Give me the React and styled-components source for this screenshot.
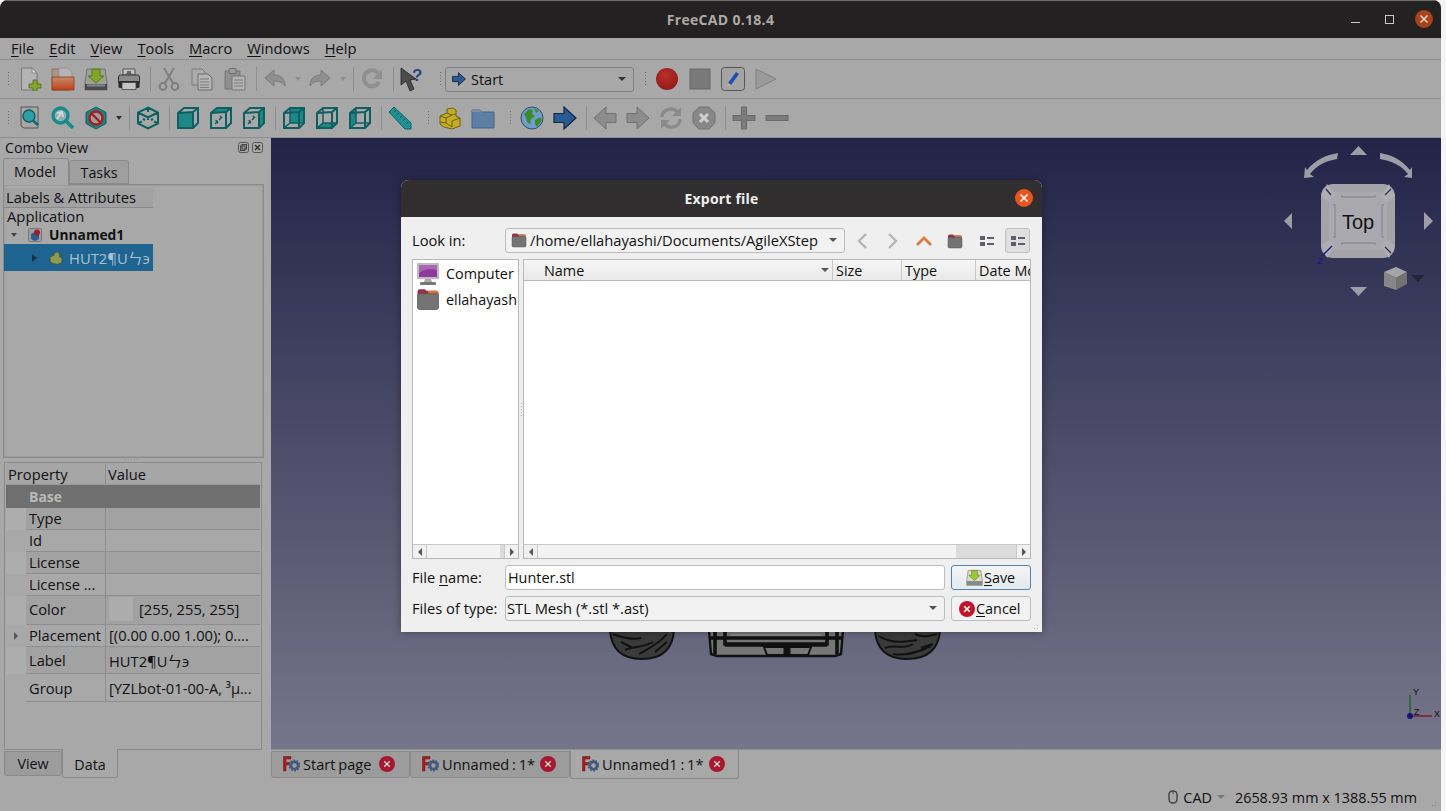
import React from 'react'
import styled, { createGlobalStyle } from 'styled-components'

const FONT = `"Open Sans", "Noto Sans CJK SC", sans-serif`

const Global = createGlobalStyle`
  html, body { margin: 0; padding: 0; background: #f4f4f4; overflow: hidden; }
  body { font-family: ${FONT}; font-size: 14px; color: #111; }
  * { box-sizing: border-box; }
`

const Screen = styled.div`
  position: relative;
  width: 1446px;
  height: 811px;
  overflow: hidden;
`
const Window = styled.div`
  display: flex;
  flex-direction: column;
  width: 1441px;
  height: 811px;
  background: #a8a8a8;
  border-radius: 8px 8px 0 0;
  overflow: hidden;
`
const TitleBar = styled.div`
  position: relative;
  flex: none;
  height: 38px;
  display: flex;
  align-items: center;
  justify-content: center;
  background: #232122;
  border-top: 1px solid #6c6c6c;
  color: #aeaaa2;
  font-weight: 700;
  font-size: 14px;
  letter-spacing: 0.3px;
`
const WinControls = styled.div`
  position: absolute;
  left: 1351px;
  top: 9px;
  display: flex;
  align-items: center;
`
const WinMin = styled.div`
  width: 9px;
  height: 1px;
  margin-top: 6px;
  background: #c8c8c8;
`
const WinMax = styled.div`
  width: 9px;
  height: 9px;
  margin-left: 25px;
  border: 1px solid #c8c8c8;
`
const WinClose = styled.div`
  width: 18px;
  height: 18px;
  margin-left: 21px;
  border-radius: 50%;
  background: #a8431c;
  color: #e4d4cc;
  display: flex;
  align-items: center;
  justify-content: center;
`
const MenuBar = styled.div`
  flex: none;
  height: 22px;
  display: flex;
  align-items: center;
  gap: 15px;
  padding: 0 0 2px 11px;
  border-bottom: 1px solid #8e8e8e;
  font-size: 14.7px;
`
const Key = styled.span`
  text-decoration: underline;
  text-underline-offset: 2px;
`
const ToolRow = styled.div`
  flex: none;
  height: 39px;
  display: flex;
  align-items: center;
  padding-left: 13.5px;
  border-bottom: 1px solid #8e8e8e;
  position: relative;
`
const ToolBtn = styled.div`
  flex: none;
  width: 33px;
  height: 26px;
  display: flex;
  align-items: center;
  justify-content: center;
`
const ToolArrow = styled.div`
  flex: none;
  width: 12px;
  display: flex;
  justify-content: center;
  &::after {
    content: '';
    border-left: 3.5px solid transparent;
    border-right: 3.5px solid transparent;
    border-top: 4px solid ${p => p.$dim ? '#8c8c8c' : '#333'};
  }
`
const ToolSep = styled.div`
  flex: none;
  width: 7px;
  height: 26px;
  position: relative;
  &::after {
    content: '';
    position: absolute;
    left: 4px;
    top: 1px;
    bottom: 1px;
    width: 1px;
    background: #8e8e8e;
  }
`
const Handle = styled.div`
  flex: none;
  width: 16.5px;
  height: 26px;
  position: relative;
  &::after {
    content: '';
    position: absolute;
    left: 10px;
    top: 5px;
    width: 3px;
    height: 16px;
    background-image: radial-gradient(circle, #707070 0.7px, transparent 0.9px);
    background-size: 3px 3px;
  }
`
const FirstHandle = styled(Handle)`
  position: absolute;
  left: -3px;
  top: 6px;
  width: 13px;
`
const StartCombo = styled.div`
  flex: none;
  width: 189px;
  height: 25px;
  display: flex;
  align-items: center;
  gap: 5px;
  padding: 0 7px 0 6px;
  border: 1px solid #808080;
  border-radius: 3px;
  font-size: 14.5px;
`
const ComboCaret = styled.span`
  margin-left: ${p => p.$inline ? '0' : 'auto'};
  border-left: 4px solid transparent;
  border-right: 4px solid transparent;
  border-top: 4px solid ${p => p.$c || '#333'};
`
const MainArea = styled.div`
  flex: 1;
  min-height: 0;
  display: flex;
`
const LeftPanel = styled.div`
  flex: none;
  width: 271px;
  display: flex;
  flex-direction: column;
`
const ComboHeader = styled.div`
  flex: none;
  height: 20px;
  display: flex;
  align-items: center;
  padding: 0 8px 2px 5px;
  font-size: 14.3px;
`
const FloatBtns = styled.div`
  margin-left: auto;
  display: flex;
  gap: 3px;
`
const TabRow = styled.div`
  flex: none;
  height: 26px;
  display: flex;
  align-items: flex-end;
  padding-left: 3px;
`
const UpperTab = styled.div`
  height: ${p => p.$on ? 27 : 24}px;
  width: ${p => p.$w}px;
  margin-bottom: ${p => p.$on ? -1 : 0}px;
  padding: 0 ${p => p.$on ? 2 : 0}px ${p => p.$on ? 2 : 0}px 0;
  display: flex;
  align-items: center;
  justify-content: center;
  position: relative;
  z-index: ${p => p.$on ? 2 : 0};
  background: ${p => p.$on ? '#a8a8a8' : '#9f9f9f'};
  border: 1px solid #8a8a8a;
  border-bottom: ${p => p.$on ? 'none' : '1px solid #8a8a8a'};
  border-radius: 3px 3px 0 0;
  font-size: 14.3px;
`
const TreeFrame = styled.div`
  flex: none;
  height: 274px;
  margin: 0 7px 0 3px;
  border: 1px solid #8a8a8a;
  box-shadow: inset 0 0 0 1px #9c9c9c;
  padding: 3px 1px 0 0;
`
const TreeHeader = styled.div`
  width: 149px;
  height: 20px;
  padding: 0 0 2px 2px;
  background: #a2a2a2;
  border-bottom: 1px solid #8a8a8a;
  display: flex;
  align-items: center;
  font-size: 14.7px;
`
const TreeLine = styled.div`
  width: 149px;
  height: ${p => p.$h}px;
  display: flex;
  align-items: center;
  padding-left: ${p => p.$pad}px;
  padding-bottom: ${p => p.$up ? 2 : 0}px;
  font-size: ${p => p.$bold ? 13.8 : 14.8}px;
  font-weight: ${p => p.$bold ? 700 : 400};
  background: ${p => p.$sel ? '#1f6491' : 'transparent'};
  color: ${p => p.$sel ? '#a9c2d2' : '#111'};
`
const TreeCaret = styled.span`
  flex: none;
  margin-right: ${p => p.$mr}px;
  border-style: solid;
  ${p => p.$open
    ? 'border-width: 4px 3px 0 3px; border-color: #444 transparent transparent transparent;'
    : 'border-width: 4px 0 4px 5px; border-color: transparent transparent transparent #15344c;'}
`
const TreeIconGap = styled.span`
  margin-left: ${p => p.$ml}px;
`
const Splitter = styled.div`
  flex: none;
  height: 4px;
  display: flex;
  justify-content: center;
  padding-right: 8px;
  &::after {
    content: '';
    width: 16px;
    height: 3px;
    background-image: radial-gradient(circle, #8a8a8a 0.6px, transparent 0.8px);
    background-size: 3px 3px;
  }
`
const PropFrame = styled.div`
  flex: none;
  height: 288px;
  margin: 0 9px 0 4px;
  border: 1px solid #8a8a8a;
  padding: 1px;
  font-size: 14.7px;
`
const PropHead = styled.div`
  height: 21px;
  display: grid;
  grid-template-columns: 100px 1fr;
  align-items: center;
  border-bottom: 1px solid #9a9a9a;
  background: #a6a6a6;
`
const HeadCell = styled.div`
  height: 100%;
  display: flex;
  align-items: center;
  padding-left: 2px;
  border-right: ${p => p.$line ? '1px solid #8e8e8e' : 'none'};
`
const GroupRow = styled.div`
  height: 23px;
  padding-left: 23px;
  display: flex;
  align-items: center;
  background: #6f6f6f;
  color: #b9b9b9;
  font-weight: 700;
  font-size: 14px;
`
const PropRow = styled.div`
  height: ${p => p.$h}px;
  display: grid;
  grid-template-columns: 20px 80px 1fr;
  background: ${p => p.$alt ? '#a2a2a2' : '#a8a8a8'};
`
const Gutter = styled.div`
  display: flex;
  align-items: center;
  padding-left: 8px;
  background: ${p => p.$alt ? '#adadad' : '#a8a8a8'};
`
const PropKey = styled.div`
  display: flex;
  align-items: center;
  padding-left: 3px;
  padding-bottom: ${p => p.$up ? 2 : 0}px;
  border-bottom: 1px solid #8e8e8e;
  border-right: 1px solid #8e8e8e;
  white-space: nowrap;
  overflow: hidden;
`
const PropVal = styled.div`
  display: flex;
  align-items: center;
  padding-left: 3px;
  padding-bottom: ${p => p.$up ? 2 : 0}px;
  border-bottom: 1px solid #8e8e8e;
  white-space: nowrap;
  overflow: hidden;
`
const Swatch = styled.span`
  flex: none;
  width: 24px;
  height: 24px;
  margin: 0 6px 0 0;
  background: #acacac;
`
const SmallCaret = styled.span`
  border-style: solid;
  border-width: 4px 0 4px 4px;
  border-color: transparent transparent transparent #555;
`
const BottomTabs = styled.div`
  flex: 1;
  display: flex;
  align-items: flex-start;
  padding-left: 4px;
  font-size: 14.3px;
`
const LowerTab = styled.div`
  width: ${p => p.$w}px;
  height: ${p => p.$on ? 29 : 25}px;
  margin-top: ${p => p.$on ? -1 : 1}px;
  padding-top: ${p => p.$on ? 2 : 0}px;
  display: flex;
  align-items: center;
  justify-content: center;
  background: ${p => p.$on ? '#a8a8a8' : '#9c9c9c'};
  border: 1px solid #8a8a8a;
  border-top: ${p => p.$on ? 'none' : '1px solid #8a8a8a'};
  border-radius: 0 0 3px 3px;
`
const CenterColumn = styled.div`
  flex: 1;
  display: flex;
  flex-direction: column;
  min-width: 0;
`
const Viewport = styled.div`
  position: relative;
  flex: none;
  height: 612px;
  background: linear-gradient(#232349 0%, #76758a 100%);
  border-bottom: 1px solid #8e8e8e;
  overflow: hidden;
`
const NavCube = styled.svg`
  position: absolute;
  left: 989px;
  top: 0;
`
const Axes = styled.svg`
  position: absolute;
  left: 1124px;
  top: 548px;
`
const Robot = styled.svg`
  position: absolute;
  left: 338px;
  top: 492px;
`
const DocTabs = styled.div`
  flex: 1;
  display: flex;
  align-items: flex-start;
`
const DocTab = styled.div`
  width: ${p => p.$w}px;
  height: ${p => p.$on ? 30 : 27}px;
  margin-top: ${p => p.$on ? -1 : 1}px;
  padding: ${p => p.$on ? 1 : 0}px 0 ${p => p.$on ? 0 : 2}px 11px;
  display: flex;
  align-items: center;
  gap: 3px;
  background: ${p => p.$on ? '#a8a8a8' : '#9c9c9c'};
  border: 1px solid #8a8a8a;
  border-top: ${p => p.$on ? 'none' : '1px solid #8a8a8a'};
  border-radius: 0 0 3px 3px;
  font-size: 14.6px;
  word-spacing: -1px;
`
const TabClose = styled.span`
  flex: none;
  width: 16px;
  height: 16px;
  margin-left: ${p => p.$ml ?? 4}px;
  border-radius: 50%;
  background: ${p => p.$bright ? '#c4142c' : '#a5182f'};
  color: ${p => p.$bright ? '#fff' : '#ddd'};
  display: flex;
  align-items: center;
  justify-content: center;
`
const StatusBar = styled.div`
  flex: none;
  height: 31px;
  position: relative;
  display: flex;
  align-items: center;
  justify-content: flex-end;
  padding: 3px 24px 0 0;
  font-size: 14.4px;
`
const StatusCad = styled.div`
  display: flex;
  align-items: center;
  gap: 5px;
  margin-right: 10px;
`
const Grip = styled.div`
  position: absolute;
  right: ${p => p.$r || 0}px;
  bottom: ${p => p.$b || 0}px;
  width: 10px;
  height: 10px;
  background-image: radial-gradient(circle, ${p => p.$c || '#8c8c8c'} 0.7px, transparent 0.9px);
  background-size: 3px 3px;
  clip-path: polygon(100% 0, 100% 100%, 0 100%);
`

/* dialog */
const Dialog = styled.div`
  position: absolute;
  left: 401px;
  top: 180px;
  width: 641px;
  height: 452px;
  display: flex;
  flex-direction: column;
  border-radius: 8px 8px 0 0;
  background: #efefef;
  box-shadow: 0 0 8px rgba(0, 0, 0, 0.35);
  font-size: 14.7px;
`
const DialogTitle = styled.div`
  position: relative;
  flex: none;
  height: 37px;
  display: flex;
  align-items: center;
  justify-content: center;
  background: #302e2e;
  border-radius: 8px 8px 0 0;
  color: #eee;
  font-weight: 700;
  font-size: 14px;
  letter-spacing: 0.2px;
`
const DialogClose = styled.div`
  position: absolute;
  right: 9px;
  top: 9px;
  width: 18px;
  height: 18px;
  border-radius: 50%;
  background: #e9541f;
  color: #fff;
  display: flex;
  align-items: center;
  justify-content: center;
`
const DialogBody = styled.div`
  position: relative;
  flex: 1;
  display: flex;
  flex-direction: column;
  padding: 11px;
`
const LookRow = styled.div`
  display: flex;
  align-items: center;
  height: 25px;
`
const FieldLabel = styled.div`
  flex: none;
  width: 93px;
  padding-bottom: 2px;
  white-space: nowrap;
`
const PathCombo = styled.div`
  flex: none;
  width: 340px;
  height: 25px;
  display: flex;
  align-items: center;
  gap: 3px;
  padding: 0 7px 2px 5px;
  background: #f2f2f2;
  border: 1px solid #bdbdbd;
  border-radius: 3px;
  white-space: nowrap;
`
const NavBtns = styled.div`
  display: flex;
  align-items: center;
  margin-left: 1px;
`
const NavBtn = styled.div`
  flex: none;
  width: ${p => p.$w || 31}px;
  height: 25px;
  display: flex;
  align-items: center;
  justify-content: center;
  ${p => p.$on && 'background: #e0e0e0; border: 1px solid #c0c0c0; border-radius: 3px; margin-left: 3px;'}
`
const BrowseRow = styled.div`
  display: flex;
  margin-top: 6px;
  height: 300px;
`
const Sidebar = styled.div`
  flex: none;
  width: 107px;
  display: flex;
  flex-direction: column;
  background: #fff;
  border: 1px solid #b8b8b8;
  overflow: hidden;
`
const SideItem = styled.div`
  height: ${p => p.$h}px;
  display: flex;
  align-items: center;
  gap: 6px;
  padding-left: 3px;
  white-space: nowrap;
  font-size: 14.4px;
`
const SideSpace = styled.div`
  flex: 1;
`
const Gap4 = styled.div`
  flex: none;
  width: 4px;
  display: flex;
  align-items: center;
  justify-content: center;
  &::after {
    content: '';
    width: 3px;
    height: 14px;
    background-image: radial-gradient(circle, #b0b0b0 0.6px, transparent 0.8px);
    background-size: 3px 3px;
  }
`
const FileList = styled.div`
  flex: none;
  width: 508px;
  display: flex;
  flex-direction: column;
  background: #fff;
  border: 1px solid #b8b8b8;
  overflow: hidden;
`
const FileHead = styled.div`
  flex: none;
  height: 21px;
  display: flex;
  background: linear-gradient(#f6f6f6, #e9e9e9);
  border-bottom: 1px solid #b8b8b8;
`
const FileCol = styled.div`
  flex: none;
  width: ${p => p.$w}px;
  display: flex;
  align-items: center;
  padding-left: ${p => p.$pad || 3}px;
  padding-right: 3px;
  border-right: ${p => p.$last ? 'none' : '1px solid #c8c8c8'};
  white-space: nowrap;
  font-size: 14.4px;
`
const HeadCaret = styled.span`
  margin-left: auto;
  border-left: 4px solid transparent;
  border-right: 4px solid transparent;
  border-top: 4px solid #555;
`
const FileSpace = styled.div`
  flex: 1;
`
const ScrollBar = styled.div`
  flex: none;
  height: 14px;
  display: flex;
  align-items: center;
  background: #f0f0f0;
  border-top: 1px solid #c8c8c8;
`
const ScrollEnd = styled.div`
  flex: none;
  width: 14px;
  height: 100%;
  display: flex;
  align-items: center;
  justify-content: center;
  border-${p => p.$side}: 1px solid #c8c8c8;
  &::after {
    content: '';
    border-style: solid;
    border-width: 4px ${p => p.$side === 'right' ? '4px 4px 0' : '0 4px 4px'};
    border-color: transparent ${p => p.$side === 'right' ? '#555' : 'transparent'} transparent ${p => p.$side === 'right' ? 'transparent' : '#555'};
  }
`
const ScrollThumb = styled.div`
  flex: ${p => p.$w ? 'none' : 1};
  width: ${p => p.$w ? `${p.$w}px` : 'auto'};
  height: 100%;
  background: ${p => p.$dark ? '#dcdcdc' : '#f3f3f3'};
`
const FormRow = styled.div`
  display: flex;
  align-items: center;
  height: 25px;
  margin-top: ${p => p.$mt}px;
`
const NameInput = styled.div`
  flex: none;
  width: 440px;
  height: 25px;
  display: flex;
  align-items: center;
  padding-left: 2px;
  background: #fff;
  border: 1px solid #bdbdbd;
  border-radius: 3px;
  font-size: 14.4px;
`
const TypeCombo = styled.div`
  flex: none;
  width: 440px;
  height: 25px;
  display: flex;
  align-items: center;
  padding: 0 7px 2px 1px;
  background: #f2f2f2;
  border: 1px solid #bdbdbd;
  border-radius: 3px;
`
const DlgButton = styled.div`
  flex: none;
  width: 80px;
  height: 25px;
  margin-left: 6px;
  display: flex;
  align-items: center;
  padding-left: ${p => p.$pad}px;
  gap: 1px;
  background: ${p => p.$primary ? 'linear-gradient(#f4f4f4, #e4eaee)' : '#f2f2f2'};
  border: 1px solid ${p => p.$primary ? '#4f86ab' : '#bdbdbd'};
  border-radius: 3px;
  font-size: 14.4px;
`

/* icons */
const I = ({ s = 24, w, h, children, vb = '0 0 24 24' }) => (
  <svg width={w || s} height={h || s} viewBox={vb}>{children}</svg>
)

const X = ({ s = 8, c = 'currentColor', sw = 1.6 }) => (
  <svg width={s} height={s} viewBox="0 0 10 10">
    <path d="M1.5 1.5l7 7M8.5 1.5l-7 7" stroke={c} strokeWidth={sw} fill="none" />
  </svg>
)

const Cube = ({ face }) => {
  const teal = '#1f8788', line = '#0e5f62'
  const faces = {
    front: 'M2 7L17 6V22L2 22Z',
    top: 'M2 7L8 2H22L17 6Z',
    right: 'M17 6L22 2V17L17 22Z',
    rear: 'M8 2H22V17H8Z',
    bottom: 'M2 22L8 17H22L17 22Z',
    left: 'M2 7L8 2V17L2 22Z',
  }
  return (
    <I>
      {face && <path d={faces[face]} fill={teal} />}
      <path d="M2 7L8 2H22V17L17 22H2Z M2 7L17 6L22 2 M17 6V22" fill="none" stroke={line} strokeWidth="2" />
      {(face === 'rear' || face === 'bottom' || face === 'left') && <path d="M8 2V17H22 M8 17L2 22" fill="none" stroke={line} strokeWidth="1.5" />}
      {(face === 'top' || face === 'right') && <path d="M6 18l2.5-2.5 M10 14l2-2 M6.5 14.5l2 1 0 2 M11 10l1.5 1.5-1.5 1" fill="none" stroke={line} strokeWidth="1.4" />}
    </I>
  )
}

const IsoCube = () => (
  <I>
    <path d="M12 1.5L22 6.5V17.5L12 22.5L2 17.5V6.5Z M2 6.5L12 11.5L22 6.5 M12 1.5V6 M2 17.5L6 15.5 M22 17.5L18 15.5 M12 11.5V14 M7 13l2 1 M17 13l-2 1" fill="none" stroke="#0e5f62" strokeWidth="2" />
  </I>
)

const FreeTab = () => (
  <svg width="17" height="16" viewBox="0 0 17 16">
    <path d="M0.5 0.5H8V3H3V6.5H7V9H3V15H0.5Z" fill="#a81c1c" stroke="#6c1414" strokeWidth="0.5" />
    <circle cx="11.5" cy="9.5" r="3.6" fill="none" stroke="#3f5a7e" strokeWidth="2.6" />
    <circle cx="11.5" cy="9.5" r="5.3" fill="none" stroke="#3f5a7e" strokeWidth="1.4" strokeDasharray="1.8 1.5" />
  </svg>
)

const Folder = ({ s = 16 }) => (
  <svg width={s} height={s} viewBox="0 0 16 16">
    <path d="M1 3a1.5 1.5 0 0 1 1.5-1.5H6l1 1h6.5A1.5 1.5 0 0 1 15 4V6H1Z" fill="#93324a" />
    <path d="M8 2.5h5.5A1.5 1.5 0 0 1 15 4V5H8Z" fill="#d8703f" />
    <rect x="1" y="4.5" width="14" height="10.5" rx="1.5" fill="#747474" stroke="#555" strokeWidth="0.5" />
  </svg>
)

const ListIcon = () => (
  <svg width="14" height="12" viewBox="0 0 14 12">
    <path d="M0 1h5v4H0z M0 7h5v4H0z M7 2h7v2H7z M7 8h7v2H7z" fill="#5a5f69" />
  </svg>
)

const ToolIcons = {
  new: <I><path d="M3.5 1H14l5 5v17H3.5Z" fill="#b4b4b4" stroke="#777" /><path d="M14 1v5h5Z" fill="#d0d0d0" stroke="#777" strokeWidth=".6" /><path d="M15 13h4v4h4v4h-4v3h-4v-3h-4v-4h4Z" fill="#86a52c" stroke="#51691a" strokeWidth=".8" /></I>,
  open: <I><defs><linearGradient id="fo" x1="0" y1="0" x2="0" y2="1"><stop offset="0" stopColor="#c98a6a" /><stop offset="1" stopColor="#bd431a" /></linearGradient></defs><path d="M1 2h8l2 2h8v19H1Z" fill="#a99784" stroke="#7f6a58" strokeWidth=".8" /><path d="M8 1h9l4 4v9H8Z" fill="#b4b4b4" stroke="#888" strokeWidth=".7" /><path d="M1 10h22v13H1Z" fill="url(#fo)" stroke="#8c3b1a" strokeWidth=".8" /></I>,
  save: <I><path d="M3 2h18l2 14v7H1v-7Z" fill="#9ca294" stroke="#666" strokeWidth=".8" /><path d="M1 17h22v6H1Z" fill="#4a4a4a" /><path d="M3 17.5h18v2H3Z" fill="#888" /><path d="M8 2h8v7h4l-8 7-8-7h4Z" fill="#7fa52a" stroke="#52701a" strokeWidth=".8" /></I>,
  print: <I><path d="M6 2h12v6H6Z" fill="#c4c4c4" stroke="#555" /><path d="M10 4h4v2h2l-4 2-4-2h2Z" fill="#666" /><rect x="1.5" y="8" width="21" height="9" rx="2" fill="#8a8a8a" stroke="#333" /><rect x="1.5" y="14" width="21" height="7" rx="1.5" fill="#2c2c2c" /><rect x="5" y="15.5" width="14" height="7" fill="#c4c4c4" stroke="#444" strokeWidth=".8" /></I>,
  cut: <I><g fill="none" stroke="#7f7f7f" strokeWidth="2"><path d="M7 1l9 15 M17 1L8 16" /><circle cx="6" cy="19.5" r="3.4" /><circle cx="18" cy="19.5" r="3.4" /></g></I>,
  copy: <I><path d="M2 2h10l3 3v13H2Z" fill="#ababab" stroke="#7d7d7d" /><path d="M8 7h10l4 4v12H8Z" fill="#b4b4b4" stroke="#6e6e6e" /><path d="M10 12h9M10 15h9M10 18h9M10 20.5h9" stroke="#7d7d7d" /></I>,
  paste: <I><path d="M2 4h15v18H2Z" fill="#8f8f8f" stroke="#777" /><rect x="6" y="1.5" width="7" height="5" rx="1" fill="#9d9d9d" stroke="#6d6d6d" /><path d="M9 9h13v14H9Z" fill="#b3b3b3" stroke="#777" /><path d="M11 13h9M11 16h9M11 19h9" stroke="#7d7d7d" /></I>,
  undo: <I><path d="M2 11l9-8v5c7 0 11 4 11 11-3-4-6-5-11-5v5Z" fill="#8f8f8f" stroke="#7a7a7a" /></I>,
  redo: <I><path d="M22 11l-9-8v5C6 8 2 12 2 19c3-4 6-5 11-5v5Z" fill="#8f8f8f" stroke="#7a7a7a" /></I>,
  refresh: <I><path d="M19 15a8 8 0 1 1-1-9" fill="none" stroke="#8f8f8f" strokeWidth="4" /><path d="M22 2v10H13Z" fill="#8f8f8f" /></I>,
  what: <I vb="0 0 26 26" s={26}><path d="M2 2L17 13L11 14L15 23L11 25L7 15L2 19Z" fill="#4c4c4c" stroke="#222" strokeWidth=".8" /><text x="13" y="15" fontFamily="Liberation Sans, sans-serif" fontWeight="700" fontSize="17" fill="#254878">?</text></I>,
  run: <I><defs><radialGradient id="rec" cx=".45" cy=".35" r=".7"><stop offset="0" stopColor="#bb2e28" /><stop offset="1" stopColor="#8e1a16" /></radialGradient></defs><circle cx="12" cy="12" r="11" fill="url(#rec)" /></I>,
  stop: <I><rect x="2" y="2" width="20" height="20" fill="#797979" stroke="#686868" /></I>,
  edit: <I><rect x=".5" y=".5" width="23" height="23" rx="3" fill="#a4a4a4" stroke="#555" /><path d="M15 5l3 2-8 11-3-2Z" fill="#1c4fb0" /><path d="M7 16l3 2-4 2Z" fill="#c4b08c" /></I>,
  play: <I><path d="M2 2L22 12L2 22Z" fill="#9a9a9a" stroke="#7f7f7f" /></I>,
  zoomFit: <I><path d="M3 1h17v21H6l-3-2Z" fill="#a7a7a7" stroke="#555" /><circle cx="11" cy="10" r="6" fill="#2da0a5" stroke="#0e5f62" strokeWidth="1.4" /><path d="M15 14.5L20 19" stroke="#0e6f72" strokeWidth="2.8" /></I>,
  zoomSel: <I><circle cx="9.5" cy="9.5" r="7.5" fill="#8faeb0" stroke="#1b8a8d" strokeWidth="3.4" /><path d="M14 14l8 8" stroke="#1b8a8d" strokeWidth="3.8" /><path d="M6 13l5-7 M6 7l5-1 1 5" fill="none" stroke="#d8d8d8" strokeWidth="1.8" /></I>,
  noDraw: <I><path d="M12 1L22 6.5V17.5L12 23L2 17.5V6.5Z" fill="#1f7f82" stroke="#0e5f62" /><circle cx="12" cy="12" r="6.5" fill="#9ba0a0" stroke="#a81c22" strokeWidth="2.4" /><path d="M7.5 7.5l9 9" stroke="#a81c22" strokeWidth="2.4" /></I>,
  ruler: <I><path d="M1 6L6 1L23 17V23H17Z" fill="#219094" stroke="#0e5f62" /><path d="M6 6l2-2M9 9l2-2M12 12l2-2M15 15l2-2M18 18l2-2" stroke="#0e5f62" /></I>,
  part: <I><path d="M2 10l7-3V3l6-1 3 2v6l4 2v8l-8 3-8-2-4-3Z" fill="#c4ad25" stroke="#6c6012" /><path d="M9 7l5 2 4-1 M2 10l6 2 6-3 M8 12v5l6 4v-6l8-3 M8 17l-6-1" fill="none" stroke="#6c6012" /></I>,
  group: <I><path d="M1 4h8l2 2h12v16H1Z" fill="#5c7fa6" stroke="#4a6484" /><path d="M1 4h8l2 2H1Z" fill="#7c90a8" /></I>,
  globe: <I><circle cx="12" cy="12" r="11" fill="#6f9fc8" stroke="#2e4d6c" /><path d="M4 8l5-5 4 1-1 4 3 2-4 3-1 5-3-2-1-4Z M15 14l5-3 2 3-5 7-2-3Z" fill="#3c8a2c" /><path d="M14 2l5 3-3 2Z" fill="#3c8a2c" /></I>,
  goRight: <I><path d="M1 7.5H11V1L23 12L11 23V16.5H1Z" fill="#2a5a92" stroke="#12263e" strokeWidth="1.2" /></I>,
  back: <I><path d="M23 7.5H13V1L1 12L13 23V16.5H23Z" fill="#8c8c8c" stroke="#727272" /></I>,
  fwd: <I><path d="M1 7.5H11V1L23 12L11 23V16.5H1Z" fill="#8c8c8c" stroke="#727272" /></I>,
  sync: <I><path d="M3 11C3 6 7 3 12 3c3 0 5 1 6 3" fill="none" stroke="#8a8a8a" strokeWidth="3.4" /><path d="M22 1v9h-9Z" fill="#8a8a8a" /><path d="M21 13c0 5-4 8-9 8-3 0-5-1-6-3" fill="none" stroke="#8a8a8a" strokeWidth="3.4" /><path d="M2 23v-9h9Z" fill="#8a8a8a" /></I>,
  halt: <I><path d="M7 1H17L23 7V17L17 23H7L1 17V7Z" fill="#888" stroke="#737373" /><path d="M8 8l8 8M16 8l-8 8" stroke="#cfcfcf" strokeWidth="3" /></I>,
  plus: <I><path d="M9.5 1h5v8.5H23v5h-8.5V23h-5v-8.5H1v-5h8.5Z" fill="#7c7c7c" stroke="#6a6a6a" /></I>,
  minus: <I><rect x="1" y="9.5" width="22" height="5" fill="#7c7c7c" stroke="#6a6a6a" /></I>,
}

const Row1 = [
  'new', 'open', 'save', 'print', '|', 'cut', 'copy', 'paste', '|',
  'undo', '>d', 'redo', '>d', '|', 'refresh', '|', 'what', ':', 'COMBO', ':',
  'run', 'stop', 'edit', 'play',
]
const Row2 = [
  'zoomFit', 'zoomSel', 'noDraw', '>', '|', 'ISO', '|',
  'front', 'top', 'right', '|', 'rear', 'bottom', 'left', '|',
  'ruler', ':', 'part', 'group', ':', 'globe', 'goRight', '|',
  'back', 'fwd', 'sync', 'halt', '|', 'plus', 'minus',
]
const CUBES = ['front', 'top', 'right', 'rear', 'bottom', 'left']

const renderTool = (t, i) => {
  if (t === '|') return <ToolSep key={i} />
  if (t === ':') return <Handle key={i} />
  if (t === '>') return <ToolArrow key={i} />
  if (t === '>d') return <ToolArrow key={i} $dim />
  if (t === 'ISO') return <ToolBtn key={i}><IsoCube /></ToolBtn>
  if (CUBES.includes(t)) return <ToolBtn key={i}><Cube face={t} /></ToolBtn>
  if (t === 'COMBO') {
    return (
      <StartCombo key={i}>
        <svg width="14" height="14" viewBox="0 0 24 24">
          <path d="M1 7.5H11V1L23 12L11 23V16.5H1Z" fill="#2a5a92" stroke="#12263e" strokeWidth="1.5" />
        </svg>
        Start
        <ComboCaret />
      </StartCombo>
    )
  }
  return <ToolBtn key={i}>{ToolIcons[t]}</ToolBtn>
}

const GLYPHS = 'HUT2¶Uㄣэ'

const props = [
  { k: 'Type', h: 22, alt: true, up: true },
  { k: 'Id', h: 22, up: true },
  { k: 'License', h: 22, alt: true, up: true },
  { k: 'License ...', h: 22, up: true },
  { k: 'Color', h: 29, alt: true, up: true, color: true, v: '[255, 255, 255]' },
  { k: 'Placement', h: 22, up: true, more: true, v: '[(0.00 0.00 1.00); 0....' },
  { k: 'Label', h: 27, alt: true, v: GLYPHS },
  { k: 'Group', h: 28, v: '[YZLbot-01-00-A, ³µ...' },
]

const App = () => (
  <Screen>
    <Global />
    <Window>
      <TitleBar>
        FreeCAD 0.18.4
        <WinControls>
          <WinMin />
          <WinMax />
          <WinClose><X s={10} /></WinClose>
        </WinControls>
      </TitleBar>

      <MenuBar>
        <span><Key>F</Key>ile</span>
        <span><Key>E</Key>dit</span>
        <span><Key>V</Key>iew</span>
        <span><Key>T</Key>ools</span>
        <span><Key>M</Key>acro</span>
        <span><Key>W</Key>indows</span>
        <span><Key>H</Key>elp</span>
      </MenuBar>

      <ToolRow><FirstHandle />{Row1.map(renderTool)}</ToolRow>
      <ToolRow><FirstHandle />{Row2.map(renderTool)}</ToolRow>

      <MainArea>
        <LeftPanel>
          <ComboHeader>
            Combo View
            <FloatBtns>
              <svg width="11" height="11" viewBox="0 0 11 11">
                <rect x=".5" y=".5" width="10" height="10" rx="2" fill="none" stroke="#555" />
                <rect x="4" y="2.5" width="4.5" height="4.5" fill="none" stroke="#444" />
                <rect x="2.5" y="4" width="4.5" height="4.5" fill="none" stroke="#444" />
              </svg>
              <svg width="11" height="11" viewBox="0 0 11 11">
                <rect x=".5" y=".5" width="10" height="10" rx="2" fill="none" stroke="#555" />
                <path d="M3 3l5 5M8 3l-5 5" stroke="#333" strokeWidth="1.5" />
              </svg>
            </FloatBtns>
          </ComboHeader>
          <TabRow>
            <UpperTab $on $w={66}>Model</UpperTab>
            <UpperTab $w={60}>Tasks</UpperTab>
          </TabRow>
          <TreeFrame>
            <TreeHeader>Labels &amp; Attributes</TreeHeader>
            <TreeLine $h={17} $pad={3} $up>Application</TreeLine>
            <TreeLine $h={19} $pad={7} $bold>
              <TreeCaret $open $mr={11} />
              <svg width="14" height="14" viewBox="0 0 14 14">
                <rect x=".5" y=".5" width="13" height="13" rx="1" fill="#9d9d9d" stroke="#777" />
                <path d="M3 6l4-2 4 2v5l-4 2-4-2Z" fill="#2c5a92" />
                <circle cx="9" cy="4.5" r="3" fill="#a01c28" />
              </svg>
              <TreeIconGap $ml={7}>Unnamed1</TreeIconGap>
            </TreeLine>
            <TreeLine $h={27} $pad={28} $sel>
              <TreeCaret $mr={12} />
              <svg width="14" height="14" viewBox="0 0 24 24">
                <path d="M2 10l7-3V3l6-1 3 2v6l4 2v8l-8 3-8-2-4-3Z" fill="#8d9a50" stroke="#3f4a20" />
              </svg>
              <TreeIconGap $ml={6}>{GLYPHS}</TreeIconGap>
            </TreeLine>
          </TreeFrame>
          <Splitter />
          <PropFrame>
            <PropHead>
              <HeadCell $line>Property</HeadCell>
              <HeadCell>Value</HeadCell>
            </PropHead>
            <GroupRow>Base</GroupRow>
            {props.map(p => (
              <PropRow key={p.k} $h={p.h} $alt={p.alt}>
                <Gutter $alt={p.alt}>{p.more && <SmallCaret />}</Gutter>
                <PropKey $up={p.up}>{p.k}</PropKey>
                <PropVal $up={p.up}>
                  {p.color && <Swatch />}
                  {p.v}
                </PropVal>
              </PropRow>
            ))}
          </PropFrame>
          <BottomTabs>
            <LowerTab $w={58}>View</LowerTab>
            <LowerTab $on $w={56}>Data</LowerTab>
          </BottomTabs>
        </LeftPanel>

        <CenterColumn>
          <Viewport>
            <Robot width="332" height="32" viewBox="0 0 332 32">
              <g stroke="#111" strokeWidth="2">
                <path d="M1 0H65C64 16 56 29 33 29C10 29 2 16 1 0Z" fill="#3a3a3a" />
                <path d="M266 0H331C330 16 322 29 298 29C275 29 267 16 266 0Z" fill="#3a3a3a" />
                <path d="M4 4C14 8 22 10 32 8M16 20C24 16 34 18 44 12M30 24C40 18 50 14 58 4M12 12l12 6M46 22l12-10" fill="none" />
                <path d="M270 6C282 14 296 12 308 10M276 18C286 14 296 20 304 14M284 24C296 26 310 22 322 16M306 4C314 8 320 6 328 4M312 18l12-4" fill="none" />
              </g>
              <path d="M100 0H234L232 24L226 26H108L102 24Z" fill="#777" stroke="#111" strokeWidth="2.4" />
              <path d="M106 0V24 M228 0V24 M100 8H234 M116 0V14H218V0 M116 15H218" fill="none" stroke="#111" strokeWidth="3.6" />
              <path d="M155 17H202L199 25H158Z" fill="#777" stroke="#111" strokeWidth="2" />
              <path d="M178 17V26" stroke="#111" strokeWidth="7" />
              <path d="M122 4H212V6H122Z" fill="#888" />
            </Robot>

            <NavCube width="181" height="172" viewBox="0 8 181 172">
              <g fill="#9c9da6">
                <path d="M98.5 16L90 25H107Z" />
                <path d="M90 157H107L98.5 166Z" />
                <path d="M24 91L32 83V99Z" />
                <path d="M173 91L164 82V100Z" />
                <path d="M78 23L77 29C65 31 56 36 50 44L54 47L44 48L45 37L47 40C55 30 66 25 78 23Z" />
                <path d="M120 23L120 29C132 31 142 36 148 44L144 47L152 48L152 37L150 40C142 30 132 25 120 23Z" />
              </g>
              <rect x="61" y="54" width="74" height="74" rx="12" fill="#a3a3a8" />
              <rect x="69" y="62" width="58" height="58" fill="#aaaaae" />
              <g fill="#aeaeb2">
                <path d="M61 66L67 54L75 66L69 72Z" />
                <path d="M135 66L129 54L121 66L127 72Z" />
                <path d="M61 116L67 128L75 116L69 110Z" />
                <path d="M135 116L129 128L121 116L127 110Z" />
              </g>
              <path d="M82 65V67H115V65 M82 115V113H115V115 M73 75H75V107H73 M124 75H122V107H124" fill="none" stroke="#8d8d95" strokeWidth="1.4" />
              <path d="M66 59L71 65 M131 59L125 65 M131 123L125 117" stroke="#2c2c50" strokeWidth="1.2" />
              <text x="98" y="99" textAnchor="middle" fontFamily="Liberation Sans, sans-serif" fontSize="20" fill="#111">Top</text>
              <path d="M72 116L63 125" stroke="#10109a" strokeWidth="1.2" />
              <text x="57" y="134" fontFamily="Liberation Sans, sans-serif" fontSize="9" fill="#10109a">Z</text>
              <path d="M124 142L136 137L147 142L136 148Z" fill="#a5a5a5" />
              <path d="M124 142L136 148V160L124 156Z" fill="#868686" />
              <path d="M136 148L147 142V154L136 160Z" fill="#727272" />
              <path d="M151 145H165L158 152Z" fill="#25253a" />
            </NavCube>

            <Axes width="50" height="40" viewBox="0 0 50 40">
              <path d="M15 30V9" stroke="#1e6a2e" strokeWidth="1.6" />
              <path d="M15 30H37" stroke="#7a2030" strokeWidth="1.6" />
              <circle cx="15" cy="30" r="3" fill="#14147a" />
              <text x="18" y="9" fontSize="9" fontFamily="Liberation Sans, sans-serif" fill="#111">Y</text>
              <text x="39" y="31" fontSize="9" fontFamily="Liberation Sans, sans-serif" fill="#111">X</text>
              <text x="19" y="29" fontSize="9" fontFamily="Liberation Sans, sans-serif" fill="#111">Z</text>
            </Axes>
          </Viewport>
          <DocTabs>
            <DocTab $w={139}><FreeTab />Start page<TabClose $ml={5}><X s={8} /></TabClose></DocTab>
            <DocTab $w={160}><FreeTab />Unnamed : 1*<TabClose $ml={2}><X s={8} /></TabClose></DocTab>
            <DocTab $on $w={169}><FreeTab />Unnamed1 : 1*<TabClose $ml={3}><X s={8} /></TabClose></DocTab>
          </DocTabs>
        </CenterColumn>
      </MainArea>

      <StatusBar>
        <StatusCad>
          <svg width="10" height="14" viewBox="0 0 10 14">
            <rect x="1" y="1" width="8" height="12" rx="3.5" fill="none" stroke="#444" strokeWidth="1.4" />
            <path d="M5 1v3" stroke="#444" />
          </svg>
          CAD
          <ComboCaret $inline $c="#777" />
        </StatusCad>
        2658.93 mm x 1388.55 mm
        <Grip $r={3} $b={3} />
      </StatusBar>
    </Window>

    <Dialog>
      <DialogTitle>
        Export file
        <DialogClose><X s={10} /></DialogClose>
      </DialogTitle>
      <DialogBody>
        <LookRow>
          <FieldLabel>Look in:</FieldLabel>
          <PathCombo>
            <Folder />
            /home/ellahayashi/Documents/AgileXStep
            <ComboCaret $c="#555" />
          </PathCombo>
          <NavBtns>
            <NavBtn>
              <svg width="12" height="16" viewBox="0 0 12 16"><path d="M10 1L3 8l7 7" fill="none" stroke="#b5b5b5" strokeWidth="2.4" /></svg>
            </NavBtn>
            <NavBtn>
              <svg width="12" height="16" viewBox="0 0 12 16"><path d="M2 1l7 7-7 7" fill="none" stroke="#b5b5b5" strokeWidth="2.4" /></svg>
            </NavBtn>
            <NavBtn>
              <svg width="16" height="12" viewBox="0 0 16 12"><path d="M1 10l7-7 7 7" fill="none" stroke="#dd7a3c" strokeWidth="2.8" /></svg>
            </NavBtn>
            <NavBtn $w={32}><Folder /></NavBtn>
            <NavBtn><ListIcon /></NavBtn>
            <NavBtn $on $w={25}><ListIcon /></NavBtn>
          </NavBtns>
        </LookRow>

        <BrowseRow>
          <Sidebar>
            <SideItem $h={27}>
              <svg width="24" height="24" viewBox="0 0 24 24">
                <rect x="1" y="1" width="22" height="16" fill="#bdbdbd" />
                <rect x="3" y="3" width="18" height="12" fill="#8c3b9c" />
                <path d="M3 3h18v5C14 6 8 7 3 11Z" fill="#a868b0" />
                <path d="M9 17h6l1 3H8Z" fill="#aaa" />
                <rect x="4" y="20" width="16" height="3" rx="1" fill="#777" />
              </svg>
              Computer
            </SideItem>
            <SideItem $h={24}>
              <Folder s={24} />
              ellahayash
            </SideItem>
            <SideSpace />
            <ScrollBar>
              <ScrollEnd $side="right" />
              <ScrollThumb />
              <ScrollThumb $dark $w={4} />
              <ScrollEnd $side="left" />
            </ScrollBar>
          </Sidebar>
          <Gap4 />
          <FileList>
            <FileHead>
              <FileCol $w={309} $pad={20}>Name<HeadCaret /></FileCol>
              <FileCol $w={69}>Size</FileCol>
              <FileCol $w={74}>Type</FileCol>
              <FileCol $w={56} $last>Date Mo</FileCol>
            </FileHead>
            <FileSpace />
            <ScrollBar>
              <ScrollEnd $side="right" />
              <ScrollThumb />
              <ScrollThumb $dark $w={60} />
              <ScrollEnd $side="left" />
            </ScrollBar>
          </FileList>
        </BrowseRow>

        <FormRow $mt={6}>
          <FieldLabel>File <Key>n</Key>ame:</FieldLabel>
          <NameInput>Hunter.stl</NameInput>
          <DlgButton $primary $pad={14}>
            <svg width="17" height="17" viewBox="0 0 24 24">
              <path d="M3 2h18l2 14v7H1v-7Z" fill="#d6dcc8" stroke="#888" />
              <path d="M1 17h22v6H1Z" fill="#888" />
              <path d="M8 2h8v7h4l-8 7-8-7h4Z" fill="#9cc83c" stroke="#6c8c24" />
            </svg>
            <span><Key>S</Key>ave</span>
          </DlgButton>
        </FormRow>
        <FormRow $mt={6}>
          <FieldLabel>Files of type:</FieldLabel>
          <TypeCombo>
            STL Mesh (*.stl *.ast)
            <ComboCaret $c="#555" />
          </TypeCombo>
          <DlgButton $pad={7}>
            <TabClose $ml={0} $bright><X s={8} sw={2} /></TabClose>
            <span><Key>C</Key>ancel</span>
          </DlgButton>
        </FormRow>
        <Grip $r={2} $b={1} $c="#bcbcbc" />
      </DialogBody>
    </Dialog>
  </Screen>
)

export default App
